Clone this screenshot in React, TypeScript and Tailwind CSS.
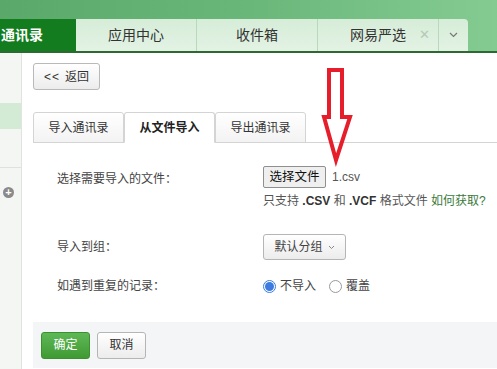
import React from "react";

const font = { fontFamily: '"Liberation Sans", "Noto Sans CJK SC", sans-serif' };

const TopTab = ({ label, close }: { label: string; close?: boolean }) => (
  <div className="relative flex h-full w-[121px] items-center justify-center border-r border-[#b9d9bd] bg-gradient-to-b from-[#d6edd8] to-[#e3f2e4] text-[14px] text-[#333]">
    {label}
    {close && <span className="absolute right-[8px] text-[13px] text-[#b5c9b7]">✕</span>}
  </div>
);

const SubTab = ({ label, active }: { label: string; active?: boolean }) => (
  <div
    className={
      "-mb-px flex h-[31px] w-[91px] items-center justify-center rounded-t-[3px] border border-[#d4d4d4] text-[12px] " +
      (active ? "border-b-white bg-white font-bold text-[#222]" : "bg-gradient-to-b from-white to-[#f3f3f3] text-[#333]")
    }
  >
    {label}
  </div>
);

const Radio = ({ checked }: { checked?: boolean }) => (
  <span
    className={
      "flex h-[13px] w-[13px] items-center justify-center rounded-full border " +
      (checked ? "border-[#3d7be0]" : "border-[#9a9a9a] bg-white")
    }
  >
    {checked && <span className="h-[9px] w-[9px] rounded-full bg-[#3d7be0]" />}
  </span>
);

export default function App() {
  return (
    <div className="relative h-[369px] w-[497px] overflow-hidden bg-white" style={font}>
      {/* header */}
      <div className="h-[53px] bg-gradient-to-r from-[#5aa96a] via-[#6ab77a] to-[#84cb92]">
        <div className="h-[19px]" />
        <div className="flex h-[34px] border-b-2 border-[#2d6a33]">
          <div className="flex h-full w-[76px] items-center bg-[#127c1e] pl-[1px] text-[14px] font-bold text-white">
            <span>通讯录</span>
          </div>
          <TopTab label="应用中心" />
          <TopTab label="收件箱" />
          <TopTab label="网易严选" close />
          <div className="flex h-full w-[29px] items-center justify-center rounded-tr-[4px] bg-gradient-to-b from-[#d6edd8] to-[#e3f2e4] text-[#777]">
            <svg width="9" height="6" viewBox="0 0 9 6">
              <path d="M1 1 L4.5 4.5 L8 1" fill="none" stroke="#777" strokeWidth="1.2" />
            </svg>
          </div>
        </div>
      </div>

      <div className="flex h-[316px]">
        {/* sidebar */}
        <div className="flex w-[22px] flex-col border-r border-[#e2e2e2] bg-[#f4f6f4]">
          <div className="h-[50px]" />
          <div className="h-[26px] bg-[#d3ead5]" />
          <div className="mt-[38px] border-t border-[#e0e0e0]" />
          <div className="mt-[19px] ml-[3px] flex h-[11px] w-[11px] items-center justify-center rounded-full bg-[#8a8a8a] text-[11px] font-bold leading-none text-white">
            +
          </div>
        </div>

        {/* main */}
        <div className="flex flex-1 flex-col pl-[11px] pt-[10px]">
          <button className="flex h-[27px] w-[67px] items-center justify-center gap-[5px] rounded-[3px] border border-[#b9b9b9] bg-gradient-to-b from-white to-[#ececec] text-[12px] text-[#333]">
            <span className="tracking-[1px]">{"<<"}</span>
            <span>返回</span>
          </button>

          <div className="mt-[22px] flex border-b border-[#d4d4d4] pl-0">
            <SubTab label="导入通讯录" />
            <SubTab label="从文件导入" active />
            <SubTab label="导出通讯录" />
          </div>

          <div className="flex flex-col pl-[24px] text-[12px] text-[#444]">
            <div className="mt-[23px] flex">
              <div className="w-[206px] pt-[4px]">选择需要导入的文件：</div>
              <div className="flex flex-col">
                <div className="flex items-center gap-[6px]">
                  <span className="flex h-[22px] w-[63px] items-center justify-center rounded-[2px] border border-[#8f8f8f] bg-[#efefef] text-[12.5px] text-[#111]">
                    选择文件
                  </span>
                  <span className="text-[12px] text-[#555]">1.csv</span>
                </div>
                <div className="mt-[4px] whitespace-nowrap text-[12px] text-[#555]">
                  只支持 <b className="text-[#333]">.CSV</b> 和 <b className="text-[#333]">.VCF</b> 格式文件{" "}
                  <span className="text-[#3b7a3b]">如何获取?</span>
                </div>
              </div>
            </div>

            <div className="mt-[24px] flex items-center">
              <div className="w-[206px]">导入到组：</div>
              <div className="flex h-[26px] w-[83px] items-center justify-center gap-[5px] rounded-[3px] border border-[#b5b5b5] bg-gradient-to-b from-white to-[#ececec] text-[12px] text-[#444]">
                默认分组
                <svg width="7" height="5" viewBox="0 0 7 5">
                  <path d="M1 1 L3.5 3.5 L6 1" fill="none" stroke="#888" strokeWidth="1" />
                </svg>
              </div>
            </div>

            <div className="mt-[17px] flex items-center">
              <div className="w-[206px]">如遇到重复的记录：</div>
              <div className="flex items-center text-[12px] text-[#444]">
                <Radio checked />
                <span className="ml-[4px]">不导入</span>
                <span className="ml-[13px]">
                  <Radio />
                </span>
                <span className="ml-[4px]">覆盖</span>
              </div>
            </div>
          </div>

          <div className="mt-[27px] flex h-[46px] items-center gap-[7px] bg-[#f4f5f7] pl-[8px]">
            <button className="flex h-[27px] w-[49px] items-center justify-center rounded-[3px] border border-[#3d8f30] bg-gradient-to-b from-[#5fb856] to-[#3f9a33] text-[12px] text-white">
              确定
            </button>
            <button className="flex h-[27px] w-[49px] items-center justify-center rounded-[3px] border border-[#b5b5b5] bg-gradient-to-b from-white to-[#ececec] text-[12px] text-[#333]">
              取消
            </button>
          </div>
        </div>
      </div>

      {/* red annotation arrow */}
      <svg className="pointer-events-none absolute left-0 top-0" width="497" height="369">
        <path
          d="M329 70 L342 70 L342 117 L350 117 L336 160 L324 117 L329 117 Z"
          fill="none"
          stroke="#e61e2b"
          strokeWidth="4"
          strokeLinejoin="miter"
        />
      </svg>
    </div>
  );
}
